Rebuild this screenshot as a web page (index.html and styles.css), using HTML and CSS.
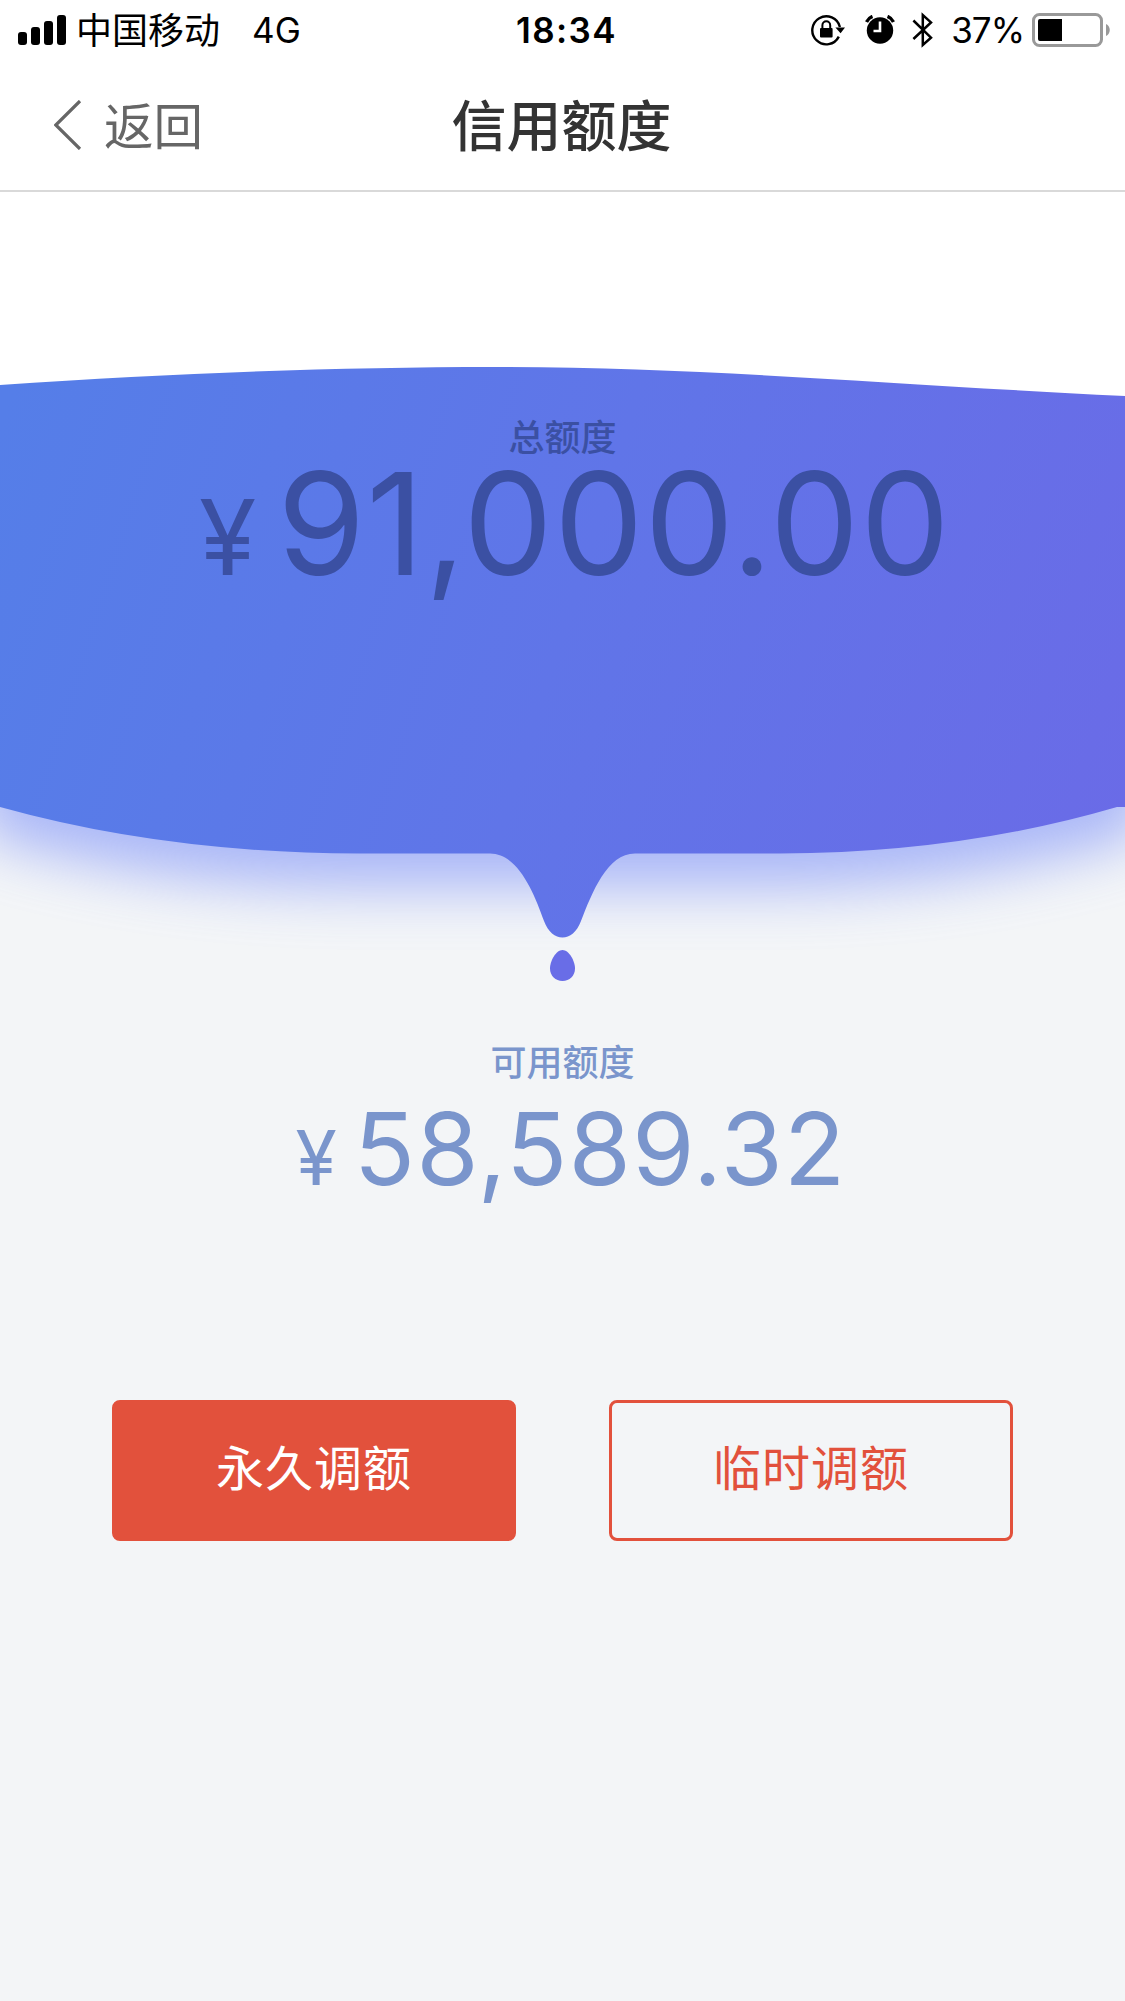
FILE: index.html
```html
<!DOCTYPE html>
<html lang="zh-CN">
<head>
  <meta charset="UTF-8">
  <meta name="viewport" content="width=device-width, initial-scale=1.0">
  <title>信用额度</title>
  <link rel="stylesheet" href="styles.css">
</head>
<body>
  <div class="status-bar">
    <div class="status-left">
      <svg class="signal" width="48" height="31" viewBox="0 0 48 31">
        <rect x="0" y="17" width="9" height="13" rx="3"/>
        <rect x="13" y="12" width="9" height="18" rx="3"/>
        <rect x="26" y="6" width="9" height="24" rx="3"/>
        <rect x="39" y="0" width="9" height="30" rx="3"/>
      </svg>
      <span class="carrier">中国移动</span>
      <span class="network">4G</span>
    </div>
    <div class="status-time">18:34</div>
    <div class="status-right">
      <svg class="icon-lock" width="35" height="32" viewBox="0 0 35 32">
        <path d="M27.8 22.6A14 14 0 1 1 28.9 13" fill="none" stroke="#000" stroke-width="2.4"/>
        <path d="M24.4 13.5H34L29.6 19.2Z"/>
        <rect x="9" y="14" width="12.6" height="9.6" rx="1"/>
        <path d="M11.4 15V11.2a3.9 3.9 0 0 1 7.8 0V15" fill="none" stroke="#000" stroke-width="2"/>
      </svg>
      <svg class="icon-alarm" width="30" height="30" viewBox="0 0 30 30">
        <circle cx="15" cy="15.5" r="13.2"/>
        <path d="M1.5 7A11 11 0 0 1 7.5 1.4M22.5 1.4A11 11 0 0 1 28.5 7" fill="none" stroke="#000" stroke-width="3.4"/>
        <path d="M15 6.5V16H8.5" fill="none" stroke="#fff" stroke-width="2.6"/>
      </svg>
      <svg class="icon-bluetooth" width="22" height="36" viewBox="0 0 22 36">
        <path d="M1.4 8.5L19 25.6L10.8 33V3L19 10.4L1.4 27" fill="none" stroke="#000" stroke-width="2.5"/>
      </svg>
      <span class="percent">37%</span>
      <svg class="battery" width="79" height="34" viewBox="0 0 79 34">
        <rect x="1.5" y="1.5" width="68" height="31" rx="6" fill="none" stroke="#999" stroke-width="3"/>
        <path d="M6 8a2 2 0 0 1 2-2H30V28H8a2 2 0 0 1-2-2Z"/>
        <path d="M74 11c5 2 5 10 0 12Z" fill="#999"/>
      </svg>
    </div>
  </div>

  <div class="nav-bar">
    <a class="back">
      <svg width="28" height="50" viewBox="0 0 28 50">
        <path d="M26 1L1.8 25L26 49" fill="none" stroke="#666" stroke-width="3.2"/>
      </svg>
      <span>返回</span>
    </a>
    <h1 class="title">信用额度</h1>
  </div>

  <div class="hero">
    <svg class="wave" width="1125" height="809" viewBox="0 0 1125 809">
      <defs>
        <linearGradient id="wave-fill" gradientUnits="userSpaceOnUse" x1="-20" y1="300" x2="1120" y2="660">
          <stop offset="0" stop-color="#557ee8"/>
          <stop offset="0.5" stop-color="#6075e8"/>
          <stop offset="1" stop-color="#6a6be7"/>
        </linearGradient>
        <filter id="wave-blur" x="-10%" y="-20%" width="120%" height="150%">
          <feGaussianBlur stdDeviation="28"/>
        </filter>
      </defs>
      <!-- page background below the wave -->
      <rect y="400" width="1125" height="409" fill="#f3f5f7"/>
      <path d="M-20 400V640L0 648Q165 696 370 696H770Q960 696 1125 648L1145 640V400Z" fill="#8497f8" opacity="0.66" filter="url(#wave-blur)"/>
      <path d="M0 193C180 181 340 175 495 175C700 175 880 192 1125 204V615H1117Q960 661 780 661.5H635C607 661.5 592 701 581 729C573 751 552 751 544 729C534 701 518 661.5 490 661.5H359Q165 661 0 615Z" fill="url(#wave-fill)"/>
      <path d="M562.5 758C569 758 575 769 575 776.5C575 784 569.5 789 562.5 789S550 784 550 776.5C550 769 556 758 562.5 758Z" fill="#696de7"/>
    </svg>
    <div class="total">
      <div class="label">总额度</div>
      <div class="amount"><span class="yen">¥</span><span class="number">91,000.00</span></div>
    </div>
  </div>

  <div class="available">
    <div class="label">可用额度</div>
    <div class="amount"><span class="yen">¥</span><span class="number">58,589.32</span></div>
  </div>

  <div class="buttons">
    <button class="btn btn-primary">永久调额</button>
    <button class="btn btn-outline">临时调额</button>
  </div>
</body>
</html>
```
FILE: styles.css
```css
* {
  box-sizing: border-box;
}

body {
  margin: 0;
  width: 1125px;
  height: 2001px;
  overflow: hidden;
  background: #f3f5f7;
  font-family: Inter, "Noto Sans CJK SC", sans-serif;
}

/* status bar */
.status-bar {
  display: grid;
  grid-template-columns: 1fr auto 1fr;
  align-items: center;
  height: 60px;
  padding: 0 14px 0 18px;
  background: #fff;
  color: #000;
  font-size: 35px;
  line-height: 58px;
}

.status-left,
.status-right {
  display: flex;
  align-items: center;
}

.status-right {
  justify-content: flex-end;
}

.carrier {
  margin-left: 10px;
  padding-top: 2px;
  font-size: 36px;
}

.network {
  margin-left: 32px;
}

.status-time {
  padding-left: 4px;
  font-weight: 600;
  letter-spacing: 1.4px;
}

.icon-alarm {
  margin-left: 19px;
}

.icon-bluetooth {
  margin-left: 17px;
}

.percent {
  margin-left: 17px;
  letter-spacing: -1px;
}

.battery {
  margin-left: 8px;
}

/* nav bar */
.nav-bar {
  display: grid;
  grid-template-columns: 1fr auto 1fr;
  align-items: center;
  height: 132px;
  padding: 0 53px;
  border-bottom: 2px solid #d9d9d9;
  background: #fff;
}

.back {
  display: flex;
  align-items: center;
  gap: 22px;
  margin-left: 1px;
  color: #666;
  font-size: 49.5px;
}

.back span {
  padding-bottom: 4px;
}

.title {
  margin: 0;
  padding: 0 2px 6px 0;
  color: #333;
  font-size: 55px;
  font-weight: 500;
}

/* hero */
.hero {
  display: grid;
  height: 809px;
  background: #fff;
}

.wave,
.total {
  grid-area: 1 / 1;
}

.label {
  font-size: 36px;
  font-weight: 500;
  line-height: 50px;
}

.amount {
  display: flex;
  align-items: baseline;
  justify-content: center;
}

.total {
  padding-top: 221px;
  color: #3b50a3;
  text-align: center;
}

.total .amount {
  padding-left: 25px;
  line-height: 121px;
}

.total .number {
  font-size: 142px;
  letter-spacing: 1px;
}

.total .yen {
  margin-right: 21px;
  font-size: 104px;
}

/* available credit */
.available {
  padding-top: 37px;
  height: 399px;
  color: #7a95cc;
  text-align: center;
}

.available .amount {
  padding-left: 17px;
  line-height: 121px;
}

.available .number {
  font-size: 101px;
  letter-spacing: 1px;
}

.available .yen {
  margin-right: 17px;
  font-size: 75px;
}

/* buttons */
.buttons {
  display: flex;
  justify-content: space-between;
  padding: 0 112px;
}

.btn {
  width: 404px;
  height: 141px;
  padding: 0 0 11px;
  border: 3px solid #e2513c;
  border-radius: 8px;
  font-family: inherit;
  font-size: 48px;
  letter-spacing: 1px;
}

.btn-primary {
  background: #e2513c;
  color: #fff;
}

.btn-outline {
  background: transparent;
  color: #e2513c;
}
```
